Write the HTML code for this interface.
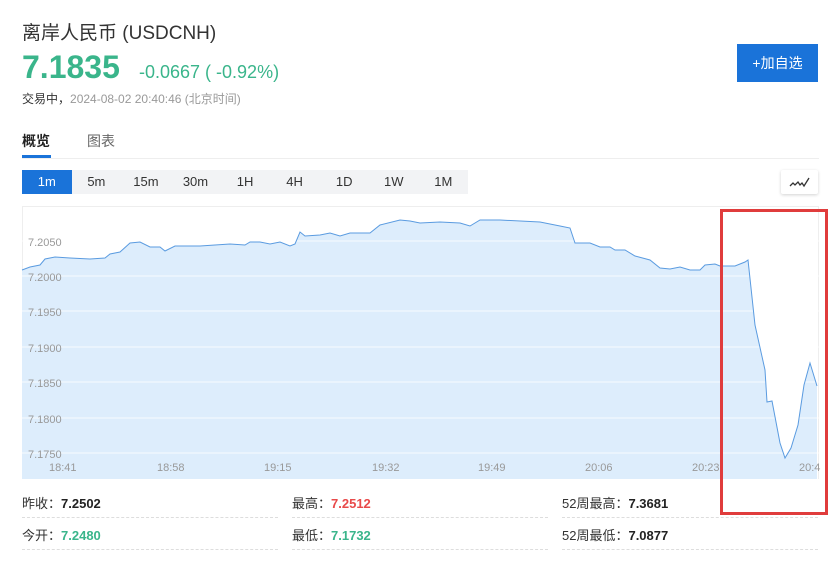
<!DOCTYPE html>
<html><head><meta charset="utf-8"><style>
body{margin:0;width:840px;height:561px;background:#fff;font-family:"Liberation Sans","Noto Sans CJK SC",sans-serif;position:relative;overflow:hidden;color:#333}
.a{position:absolute;white-space:nowrap}
.tabs{left:22px;top:170px;width:446px;height:24px;background:#f2f3f5;display:flex}
.tabs div{width:49.6px;text-align:center;font-size:13px;line-height:24px;color:#333}
.tabs .on{background:#1a73d9;color:#fff}
.st{font-size:13px;color:#333}
.st b{color:#222}
.dash{position:absolute;height:0;border-top:1px dashed #ddd}
</style></head><body>
<div class="a" style="left:22px;top:18px;font-size:19px;color:#333">离岸人民币 (USDCNH)</div>
<div class="a" style="left:22px;top:49px;font-size:32px;font-weight:bold;color:#3ab58b">7.1835</div>
<div class="a" style="left:139px;top:62px;font-size:18px;color:#3ab58b">-0.0667 ( -0.92%)</div>
<div class="a" style="left:22px;top:90px;font-size:12px;color:#333">交易中，<span style="color:#999">2024-08-02 20:40:46 (北京时间)</span></div>
<div class="a" style="left:737px;top:44px;width:81px;height:38px;background:#1a73d9;color:#fff;font-size:14px;line-height:38px;text-align:center">+加自选</div>
<div class="a" style="left:22px;top:131px;font-size:14px;font-weight:bold;color:#222">概览</div>
<div class="a" style="left:87px;top:131px;font-size:14px;color:#666">图表</div>
<div class="a" style="left:22px;top:155px;width:29px;height:3px;background:#1a73d9"></div>
<div class="a" style="left:22px;top:158px;width:797px;height:1px;background:#eee"></div>
<div class="a tabs"><div class="on">1m</div><div>5m</div><div>15m</div><div>30m</div><div>1H</div><div>4H</div><div>1D</div><div>1W</div><div>1M</div></div>
<div class="a" style="left:781px;top:170px;width:37px;height:24px;background:#fff;box-shadow:0 1px 3px rgba(0,0,0,.18);border-radius:2px">
<svg width="37" height="24"><path d="M9 16 L12 13 L14 15 L17 12 L19 15 L21 13 L23 16 L28 8" fill="none" stroke="#333" stroke-width="1.3"/></svg></div>
<div class="a" style="left:22px;top:206px;width:797px;height:273px;border:1px solid #eee;border-bottom:none;box-sizing:border-box"></div>
<svg class="a" style="left:0;top:0" width="840" height="561">
<path d="M22 270 L30 267 L40 265 L45 259 L55 257 L70 258 L90 259 L105 258 L110 254 L120 252 L130 243 L140 242 L150 247 L160 247 L165 251 L175 246 L200 246 L230 244 L245 245 L250 242 L260 242 L270 244 L280 242 L290 246 L295 244 L300 232 L305 236 L320 235 L330 233 L340 236 L350 233 L370 233 L380 225 L400 220 L410 221 L420 223 L440 222 L460 223 L470 226 L480 220 L500 220 L540 222 L560 226 L570 228 L575 243 L590 243 L600 247 L610 247 L615 250 L625 250 L635 256 L650 260 L660 268 L670 269 L680 267 L690 270 L700 270 L705 265 L715 264 L720 266 L735 266 L745 262 L748 260 L755 325 L765 370 L767 402 L772 401 L780 443 L785 458 L791 448 L798 425 L804 385 L810 363 L817 386 L817 479 L22 479 Z" fill="#ddedfc"/>
<g stroke="#fff" stroke-width="1" opacity=".8"><line x1="22" x2="819" y1="241" y2="241"/><line x1="22" x2="819" y1="276" y2="276"/><line x1="22" x2="819" y1="311" y2="311"/><line x1="22" x2="819" y1="347" y2="347"/><line x1="22" x2="819" y1="382" y2="382"/><line x1="22" x2="819" y1="418" y2="418"/><line x1="22" x2="819" y1="453" y2="453"/></g>
<path d="M22 270 L30 267 L40 265 L45 259 L55 257 L70 258 L90 259 L105 258 L110 254 L120 252 L130 243 L140 242 L150 247 L160 247 L165 251 L175 246 L200 246 L230 244 L245 245 L250 242 L260 242 L270 244 L280 242 L290 246 L295 244 L300 232 L305 236 L320 235 L330 233 L340 236 L350 233 L370 233 L380 225 L400 220 L410 221 L420 223 L440 222 L460 223 L470 226 L480 220 L500 220 L540 222 L560 226 L570 228 L575 243 L590 243 L600 247 L610 247 L615 250 L625 250 L635 256 L650 260 L660 268 L670 269 L680 267 L690 270 L700 270 L705 265 L715 264 L720 266 L735 266 L745 262 L748 260 L755 325 L765 370 L767 402 L772 401 L780 443 L785 458 L791 448 L798 425 L804 385 L810 363 L817 386" fill="none" stroke="#5a9be0" stroke-width="1"/>
<g font-size="11" fill="#999" font-family="Liberation Sans,sans-serif">
<text x="28" y="246">7.2050</text><text x="28" y="281">7.2000</text><text x="28" y="316">7.1950</text><text x="28" y="352">7.1900</text><text x="28" y="387">7.1850</text><text x="28" y="423">7.1800</text><text x="28" y="458">7.1750</text>
<text x="49" y="471">18:41</text><text x="157" y="471">18:58</text><text x="264" y="471">19:15</text><text x="372" y="471">19:32</text><text x="478" y="471">19:49</text><text x="585" y="471">20:06</text><text x="692" y="471">20:23</text><text x="799" y="471">20:4</text>
</g>
<rect x="721.5" y="210.5" width="105" height="303" fill="none" stroke="#e03c3c" stroke-width="3"/>
</svg>
<div class="a st" style="left:22px;top:493px">昨收：<b>7.2502</b></div>
<div class="a st" style="left:292px;top:493px">最高：<b style="color:#e84a4a">7.2512</b></div>
<div class="a st" style="left:562px;top:493px">52周最高：<b>7.3681</b></div>
<div class="a st" style="left:22px;top:525px">今开：<b style="color:#3ab58b">7.2480</b></div>
<div class="a st" style="left:292px;top:525px">最低：<b style="color:#3ab58b">7.1732</b></div>
<div class="a st" style="left:562px;top:525px">52周最低：<b>7.0877</b></div>
<div class="dash" style="left:22px;top:517px;width:256px"></div><div class="dash" style="left:292px;top:517px;width:256px"></div><div class="dash" style="left:562px;top:517px;width:256px"></div>
<div class="dash" style="left:22px;top:549px;width:256px"></div><div class="dash" style="left:292px;top:549px;width:256px"></div><div class="dash" style="left:562px;top:549px;width:256px"></div>
</body></html>
